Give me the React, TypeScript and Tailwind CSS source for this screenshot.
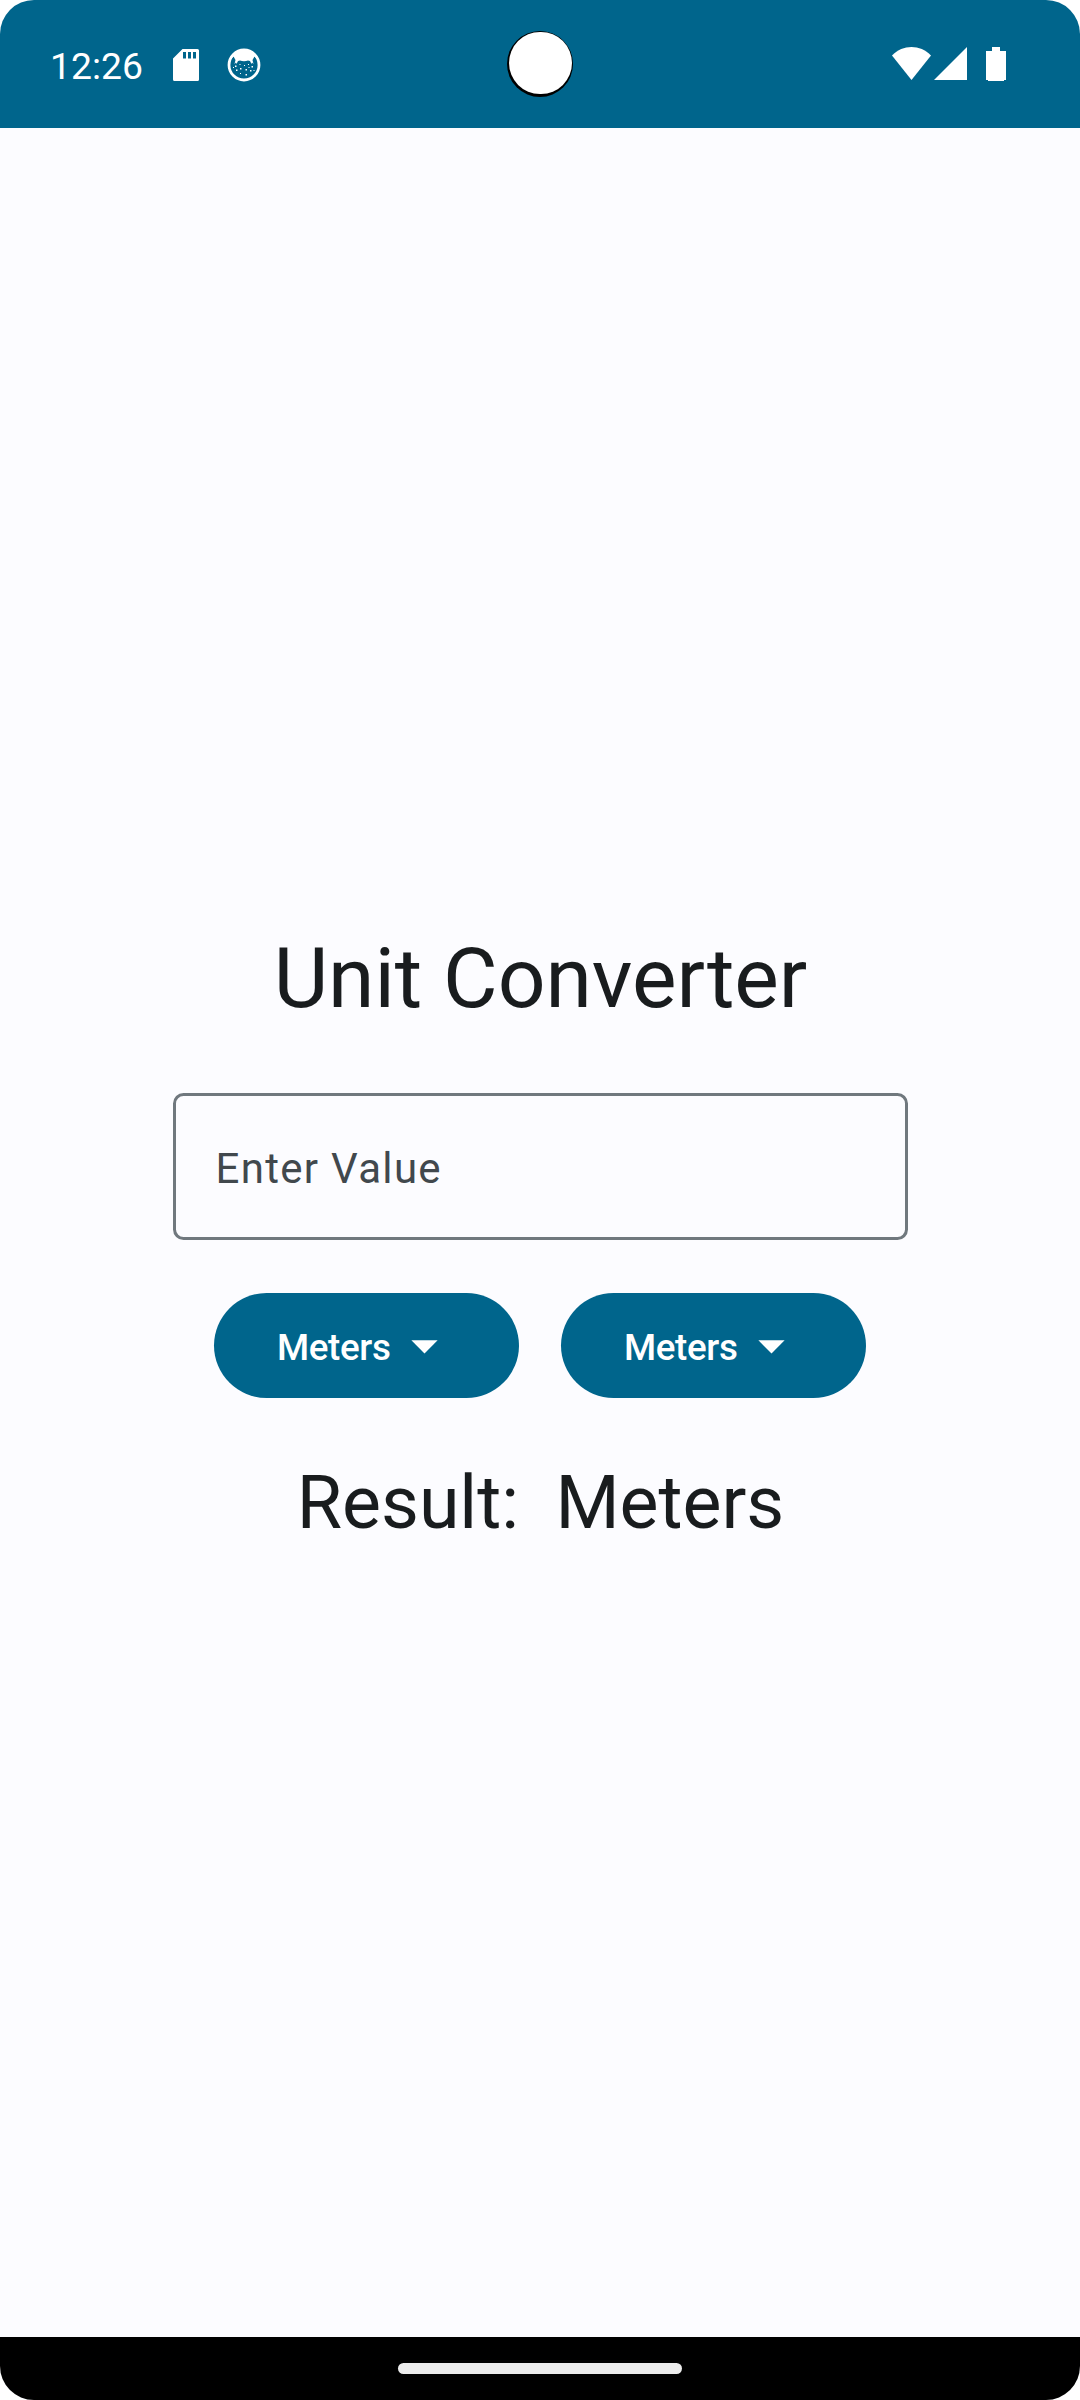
function UnitButton({ label }: { label: string }) {
  return (
    <button className="flex h-[105px] w-[305px] items-center justify-between rounded-full bg-[#00658c] px-[63px] text-white">
      <span className="whitespace-nowrap pt-1 text-[36.75px] leading-[52px] font-medium tracking-[-0.35px]">{label}</span>
      <svg className="size-[63px] shrink-0" viewBox="0 0 24 24" fill="currentColor">
        <path d="M7 10l5 5 5-5z" />
      </svg>
    </button>
  );
}

function StatusBar() {
  return (
    <header className="relative flex h-32 shrink-0 items-center bg-[#00658c] pl-[50px] pr-[74px] text-white">
      <span className="w-[123px] pt-1 text-[37.3px] leading-[44px]">12:26</span>
      <svg className="mt-[2px] h-8 w-[26px]" viewBox="0 0 26 32" fill="currentColor">
        <path
          fillRule="evenodd"
          d="M9.5 0H24.500a1.500 1.500 0 0 1 1.500 1.500V30.500a1.500 1.500 0 0 1-1.500 1.500H1.500a1.500 1.500 0 0 1-1.500-1.500V9.500zM10 3v6.500h3V3zM15 3v6.500h3V3zM20 3v6.500h3V3z"
        />
      </svg>
      <svg className="ml-[28px] mt-[2px] size-[34px]" viewBox="0 0 34 34" fill="currentColor">
        <circle cx="17" cy="17" r="15" fill="none" stroke="currentColor" strokeWidth="2.800" />
        <path d="M3 12C5 5 10 2 17 2s12 3 14 10l-3.500-3.500L25.500 12l1 4-1.500-1.500-.500 1.500-1.500-3-2-.500c-2.500 1-5.500 1-8 0l-2 .500L9.500 16 9 14.500 7.500 16l1-4-2-3.500z" />
        <path d="M8 17.500h1.500V19H8zM12.500 16h1v1h-1zM9 21.500h1.500V23H9zM13 20h1.500v1.500H13zM17 17h1v1h-1zM21 16h1v1h-1zM18.500 21h1.500v1.500h-1.500zM24.500 18H26v1.500h-1.500zM23 22h1.500v1.500H23zM18.500 26H20v1.500h-1.500zM13 25h1v1h-1zM21.500 19h1v1h-1zM6 19h1v1H6zM26.500 22h1v1h-1z" />
      </svg>
      <div className="absolute left-[507px] top-[31px] size-[66px] rounded-full bg-black pl-[2px] pt-[.5px]">
        <div className="size-[62.5px] rounded-full bg-white" />
      </div>
      <svg className="ml-auto h-[34px] w-[114px]" viewBox="0 0 114 34" fill="currentColor">
        <path d="M0 8.500C11-2.800 28-2.800 39 8.500L19.500 33z" />
        <path d="M42 33 75 0v33z" />
        <path d="M94 4h6V0h8v4h6V33h-2v1H96v-1h-2z" />
      </svg>
    </header>
  );
}

export default function App() {
  return (
    <div className="h-[2400px] w-[1080px] bg-white font-['Roboto',sans-serif]">
      <div className="flex h-full flex-col overflow-hidden rounded-[34px] bg-[#fcfcff]">
        <StatusBar />
        <main className="flex flex-1 flex-col items-center pt-[801px] text-[#191c1e]">
          <h1 className="whitespace-nowrap pl-[1px] text-[84px] leading-[100px] tracking-[-0.05px]">Unit Converter</h1>
          <input
            placeholder="Enter Value"
            className="mt-[64px] h-[147px] w-[735px] rounded-[10.5px] border-[3px] border-[#70787e] bg-transparent pt-1 pl-[40px] text-[42px] tracking-[1.3125px] placeholder:text-[#41484d] outline-none"
          />
          <div className="mt-[53px] flex gap-[42px]">
            <UnitButton label="Meters" />
            <UnitButton label="Meters" />
          </div>
          <p className="mt-[62px] whitespace-pre pl-[1px] text-[73.5px] leading-[86px] tracking-[-0.03px]">{"Result:  Meters"}</p>
        </main>
        <footer className="flex h-[63px] shrink-0 items-center justify-center bg-black">
          <div className="h-[11px] w-[284px] rounded-full bg-[#ececec]" />
        </footer>
      </div>
    </div>
  );
}
